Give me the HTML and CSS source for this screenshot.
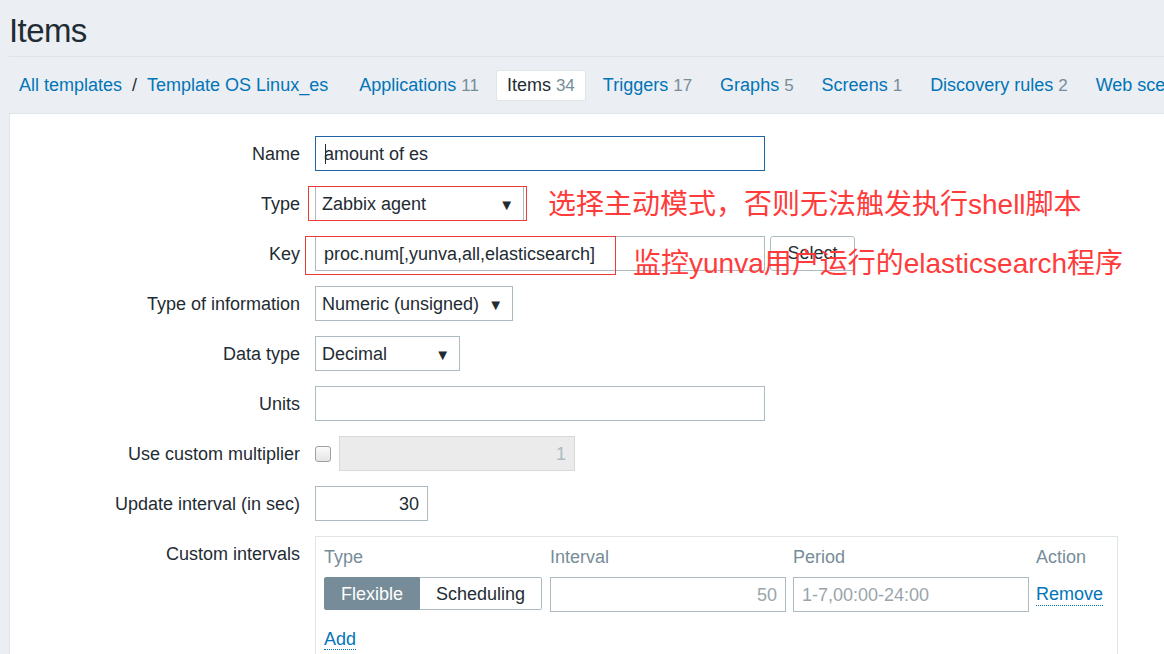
FILE: index.html
```html
<!DOCTYPE html>
<html lang="en">
<head>
<meta charset="utf-8">
<title>Items</title>
<link rel="stylesheet" href="styles.css">
</head>
<body>
<header class="page-header">
  <h1 class="page-title">Items</h1>
</header>
<nav class="tabs">
  <a class="crumb" href="#">All templates</a>
  <span class="crumb-sep">/</span>
  <a class="crumb" href="#">Template OS Linux_es</a>
  <a class="tab tab-first" href="#">Applications <span class="count">11</span></a>
  <a class="tab tab-active" href="#">Items <span class="count">34</span></a>
  <a class="tab" href="#">Triggers <span class="count">17</span></a>
  <a class="tab" href="#">Graphs <span class="count">5</span></a>
  <a class="tab" href="#">Screens <span class="count">1</span></a>
  <a class="tab" href="#">Discovery rules <span class="count">2</span></a>
  <a class="tab" href="#">Web scenarios</a>
</nav>
<main class="panel">
  <form class="form-grid">
    <label class="form-label">Name</label>
    <div class="form-field">
      <div class="text-box wide focused"><span class="caret"></span>amount of es</div>
    </div>

    <label class="form-label">Type</label>
    <div class="form-field">
      <div class="select-box w-type"><span>Zabbix agent</span><span class="arrow">▼</span></div>
    </div>

    <label class="form-label">Key</label>
    <div class="form-field">
      <div class="text-box wide">proc.num[,yunva,all,elasticsearch]</div>
      <button type="button" class="btn-select">Select</button>
    </div>

    <label class="form-label">Type of information</label>
    <div class="form-field">
      <div class="select-box w-info"><span>Numeric (unsigned)</span><span class="arrow">▼</span></div>
    </div>

    <label class="form-label">Data type</label>
    <div class="form-field">
      <div class="select-box w-data"><span>Decimal</span><span class="arrow">▼</span></div>
    </div>

    <label class="form-label">Units</label>
    <div class="form-field">
      <div class="text-box wide"></div>
    </div>

    <label class="form-label">Use custom multiplier</label>
    <div class="form-field">
      <span class="checkbox"></span>
      <div class="text-box disabled num w-mult">1</div>
    </div>

    <label class="form-label">Update interval (in sec)</label>
    <div class="form-field">
      <div class="text-box num w-update">30</div>
    </div>

    <label class="form-label">Custom intervals</label>
    <div class="form-field">
      <div class="intervals">
        <div class="intervals-grid">
          <div class="col-head">Type</div>
          <div class="col-head">Interval</div>
          <div class="col-head">Period</div>
          <div class="col-head">Action</div>

          <div class="segmented">
            <span class="seg seg-on">Flexible</span>
            <span class="seg seg-off">Scheduling</span>
          </div>
          <div class="text-box num muted">50</div>
          <div class="text-box muted">1-7,00:00-24:00</div>
          <div class="action-cell"><a class="dotted-link" href="#">Remove</a></div>
        </div>
        <div class="add-row"><a class="dotted-link" href="#">Add</a></div>
      </div>
    </div>
  </form>
</main>

<div class="note-box note-box-type"></div>
<div class="note-box note-box-key"></div>
<div class="note note-type">选择主动模式，否则无法触发执行shell脚本</div>
<div class="note note-key">监控yunva用户运行的elasticsearch程序</div>
</body>
</html>
```

FILE: styles.css
```css
html, body {
  margin: 0;
  padding: 0;
  height: 100%;
  overflow: hidden;
}

body {
  background: #ebeef2;
  font-family: "Liberation Sans", Arial, sans-serif;
  font-size: 18px;
  color: #1f2c33;
  padding-left: 9px;
  position: relative;
}

a {
  color: #0275b8;
  text-decoration: none;
}

.page-header {
  height: 56px;
  border-bottom: 1px solid #dfe4e7;
  display: flex;
  align-items: center;
}

.page-title {
  margin: 0;
  font-weight: normal;
  font-size: 33px;
  letter-spacing: -0.6px;
  color: #1f2c33;
  padding-top: 5px;
}

.tabs {
  display: flex;
  align-items: center;
  white-space: nowrap;
  padding: 13px 0;
  height: 30px;
}

.crumb {
  padding: 0 0 0 10px;
  line-height: 30px;
}

.crumb-sep {
  padding: 0 0 0 10px;
  color: #1f2c33;
}

.tab {
  line-height: 29px;
  padding: 0 10px;
  border: 1px solid transparent;
  border-radius: 2px;
  margin-right: 6px;
}

.tab-first {
  margin-left: 20px;
}

.tab-active {
  background: #fff;
  border-color: #dfe4e7;
  color: #1f2c33;
}

.count {
  color: #768d99;
  font-size: 17px;
}

.panel {
  background: #fff;
  border: 1px solid #dfe4e7;
  border-right: none;
  height: 600px;
  padding-top: 22px;
}

.form-grid {
  display: grid;
  grid-template-columns: 290px 1fr;
  column-gap: 15px;
  row-gap: 15px;
  margin: 0;
}

.form-label {
  text-align: right;
  line-height: 34px;
  padding-top: 1px;
}

.form-field {
  display: flex;
  align-items: center;
  gap: 8px;
  min-height: 35px;
}

.text-box {
  box-sizing: border-box;
  height: 35px;
  border: 1px solid #acbbc2;
  background: #fff;
  padding: 0 8px;
  line-height: 34px;
  white-space: nowrap;
  overflow: hidden;
  position: relative;
}

.text-box.wide {
  width: 450px;
}

.text-box.focused {
  border-color: #1f65a6;
}

.caret {
  position: absolute;
  left: 9px;
  top: 7px;
  width: 1px;
  height: 20px;
  background: #1f2c33;
}

.text-box.num {
  text-align: right;
}

.text-box.disabled {
  background: #ebebeb;
  border-color: #d5dadd;
  color: #acbbc2;
}

.text-box.muted {
  color: #99a5ab;
}

.w-mult {
  width: 236px;
}

.w-update {
  width: 113px;
}

.select-box {
  box-sizing: border-box;
  height: 35px;
  border: 1px solid #acbbc2;
  background: #fff;
  padding: 1px 9px 0 6px;
  display: flex;
  align-items: center;
  justify-content: space-between;
}

.arrow {
  font-size: 15px;
  color: #1f2c33;
}

.w-type {
  width: 209px;
}

.w-info {
  width: 198px;
}

.w-data {
  width: 145px;
}

.btn-select {
  box-sizing: border-box;
  height: 35px;
  width: 85px;
  margin-left: -3px;
  border: 1px solid #acbbc2;
  border-radius: 3px;
  background: #fff;
  font-family: "Liberation Sans", Arial, sans-serif;
  font-size: 18px;
  color: #1f2c33;
  padding: 0;
}

.checkbox {
  box-sizing: border-box;
  width: 16px;
  height: 16px;
  border: 1px solid #a0a0a0;
  border-radius: 3px;
  background: linear-gradient(#fbfbfb, #e4e4e4);
}

.intervals {
  box-sizing: border-box;
  width: 803px;
  min-height: 130px;
  border: 1px solid #dfe4e7;
  padding: 8px 8px 0;
  align-self: flex-start;
}

.intervals-grid {
  display: grid;
  grid-template-columns: 219px 236px 236px auto;
  column-gap: 7px;
  row-gap: 8px;
}

.col-head {
  color: #768d99;
  line-height: 24px;
}

.segmented {
  display: flex;
  height: 33px;
}

.seg {
  box-sizing: border-box;
  line-height: 32px;
  border: 1px solid #acbbc2;
  text-align: center;
}

.seg-on {
  width: 96px;
  background: #768d99;
  border-color: #768d99;
  color: #fff;
  border-radius: 2px 0 0 2px;
}

.seg-off {
  width: 122px;
  background: #fff;
  color: #1f2c33;
  border-left: none;
  border-radius: 0 2px 2px 0;
}

.action-cell {
  display: flex;
  align-items: center;
}

.dotted-link {
  border-bottom: 1px dotted #0275b8;
  line-height: 21px;
}

.add-row {
  padding-top: 17px;
}

.note-box {
  position: absolute;
  border: 1px solid #ea3a3a;
}

.note-box-type {
  left: 308px;
  top: 186px;
  width: 217px;
  height: 33px;
}

.note-box-key {
  left: 305px;
  top: 236px;
  width: 309px;
  height: 37px;
}

.note {
  position: absolute;
  color: #ff3b3b;
  font-family: "Liberation Sans", "Noto Sans CJK SC", sans-serif;
  font-size: 28px;
  line-height: 34px;
  white-space: nowrap;
}

.note-type {
  left: 548px;
  top: 188px;
}

.note-key {
  left: 633px;
  top: 247px;
}
```
